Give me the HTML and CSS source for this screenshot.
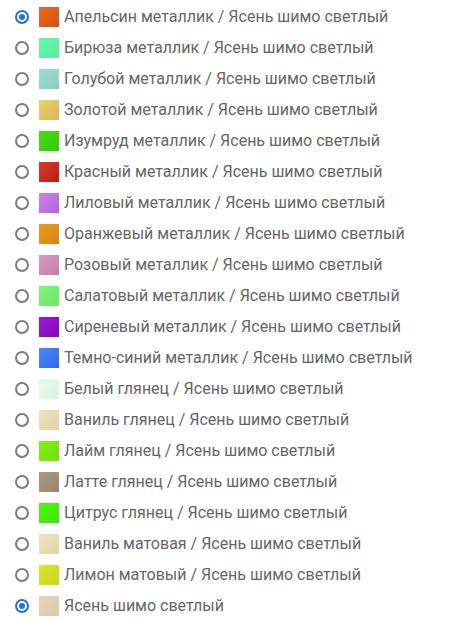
FILE: index.html
```html
<!DOCTYPE html>
<html lang="ru">
<head>
<meta charset="utf-8">
<link rel="stylesheet" href="styles.css">
</head>
<body>
<ul class="list">
  <li class="item"><span class="radio checked"></span><span class="swatch" style="background:linear-gradient(135deg,#e46a22,#d4520f)"></span><span class="label">Апельсин металлик / Ясень шимо светлый</span></li>
  <li class="item"><span class="radio"></span><span class="swatch" style="background:linear-gradient(135deg,#62f6ac,#58eea0)"></span><span class="label">Бирюза металлик / Ясень шимо светлый</span></li>
  <li class="item"><span class="radio"></span><span class="swatch" style="background:linear-gradient(135deg,#a0dccd,#88cfbf)"></span><span class="label">Голубой металлик / Ясень шимо светлый</span></li>
  <li class="item"><span class="radio"></span><span class="swatch" style="background:linear-gradient(135deg,#ead070,#d8b858)"></span><span class="label">Золотой металлик / Ясень шимо светлый</span></li>
  <li class="item"><span class="radio"></span><span class="swatch" style="background:linear-gradient(135deg,#46dc14,#36c80c)"></span><span class="label">Изумруд металлик / Ясень шимо светлый</span></li>
  <li class="item"><span class="radio"></span><span class="swatch" style="background:linear-gradient(135deg,#d83a2e,#bc1c10)"></span><span class="label">Красный металлик / Ясень шимо светлый</span></li>
  <li class="item"><span class="radio"></span><span class="swatch" style="background:linear-gradient(135deg,#d080ea,#b064dc)"></span><span class="label">Лиловый металлик / Ясень шимо светлый</span></li>
  <li class="item"><span class="radio"></span><span class="swatch" style="background:linear-gradient(135deg,#e89c22,#d88410)"></span><span class="label">Оранжевый металлик / Ясень шимо светлый</span></li>
  <li class="item"><span class="radio"></span><span class="swatch" style="background:linear-gradient(135deg,#dc98c0,#c880a8)"></span><span class="label">Розовый металлик / Ясень шимо светлый</span></li>
  <li class="item"><span class="radio"></span><span class="swatch" style="background:linear-gradient(135deg,#80f47a,#6ce866)"></span><span class="label">Салатовый металлик / Ясень шимо светлый</span></li>
  <li class="item"><span class="radio"></span><span class="swatch" style="background:linear-gradient(135deg,#a018d4,#8008bc)"></span><span class="label">Сиреневый металлик / Ясень шимо светлый</span></li>
  <li class="item"><span class="radio"></span><span class="swatch" style="background:linear-gradient(135deg,#4a88f4,#2c6ce8)"></span><span class="label">Темно-синий металлик / Ясень шимо светлый</span></li>
  <li class="item"><span class="radio"></span><span class="swatch" style="background:linear-gradient(135deg,#e6faee,#d8f4e2)"></span><span class="label">Белый глянец / Ясень шимо светлый</span></li>
  <li class="item"><span class="radio"></span><span class="swatch" style="background:linear-gradient(135deg,#ede2bc,#e2d4a8)"></span><span class="label">Ваниль глянец / Ясень шимо светлый</span></li>
  <li class="item"><span class="radio"></span><span class="swatch" style="background:linear-gradient(135deg,#86ee14,#74e00a)"></span><span class="label">Лайм глянец / Ясень шимо светлый</span></li>
  <li class="item"><span class="radio"></span><span class="swatch" style="background:linear-gradient(135deg,#a89880,#988870)"></span><span class="label">Латте глянец / Ясень шимо светлый</span></li>
  <li class="item"><span class="radio"></span><span class="swatch" style="background:linear-gradient(135deg,#4cf412,#3ee80a)"></span><span class="label">Цитрус глянец / Ясень шимо светлый</span></li>
  <li class="item"><span class="radio"></span><span class="swatch" style="background:linear-gradient(135deg,#ece2bc,#e0d6ac)"></span><span class="label">Ваниль матовая / Ясень шимо светлый</span></li>
  <li class="item"><span class="radio"></span><span class="swatch" style="background:linear-gradient(135deg,#d8e630,#c8d818)"></span><span class="label">Лимон матовый / Ясень шимо светлый</span></li>
  <li class="item"><span class="radio checked"></span><span class="swatch" style="background:linear-gradient(135deg,#e6d4bc,#dcc8ac)"></span><span class="label">Ясень шимо светлый</span></li>
</ul>
</body>
</html>
```

FILE: styles.css
```css
html, body {
  margin: 0;
  padding: 0;
  background: #ffffff;
}
body {
  font-family: Roboto, "Liberation Sans", sans-serif;
}
.list {
  list-style: none;
  margin: 0;
  padding: 1px 0 0 15px;
}
.item {
  display: flex;
  align-items: center;
  height: 31px;
}
.radio {
  box-sizing: border-box;
  width: 14px;
  height: 14px;
  border: 2px solid #7b7b86;
  border-radius: 50%;
  flex: none;
  position: relative;
}
.radio.checked {
  border-color: #1a73e8;
}
.radio.checked::after {
  content: "";
  position: absolute;
  left: 2px;
  top: 2px;
  width: 6px;
  height: 6px;
  border-radius: 50%;
  background: #1a73e8;
}
.swatch {
  width: 20px;
  height: 20px;
  margin-left: 10px;
  flex: none;
}
.label {
  margin-left: 5px;
  font-size: 16px;
  color: #666666;
  white-space: nowrap;
}
```
